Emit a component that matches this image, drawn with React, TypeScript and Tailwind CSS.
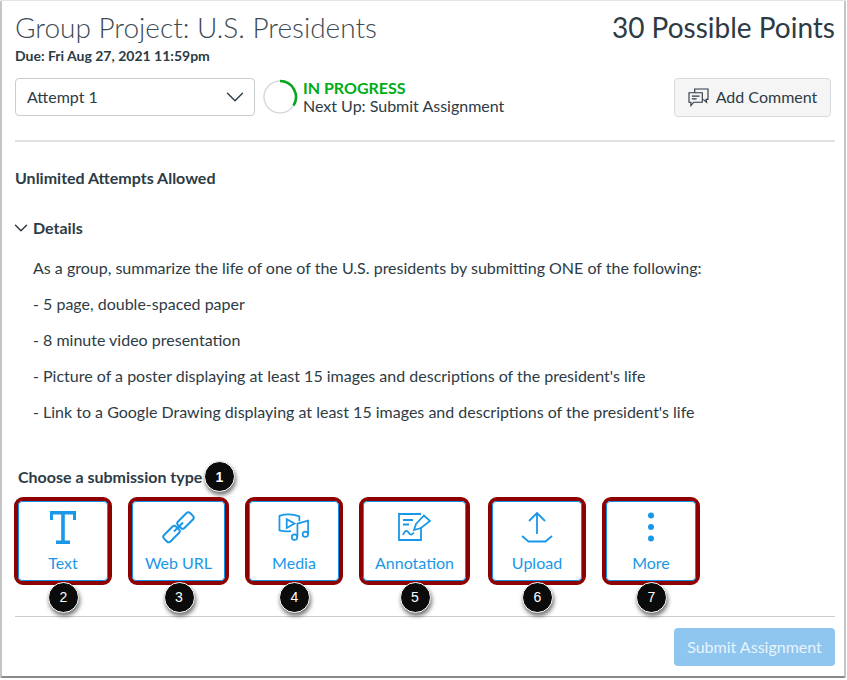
import type { ReactNode } from "react";
import { ChevronDown } from "lucide-react";

function Badge({ n, className }: { n: number; className: string }) {
  return (
    <span
      className={`absolute flex h-[31px] w-[31px] items-center justify-center rounded-full border border-white bg-[#0b0b0b] font-['Liberation_Sans',sans-serif] text-[14px] text-white shadow-[1px_3px_4px_rgba(0,0,0,0.55)] ${className}`}
    >
      {n}
    </span>
  );
}

function TypeButton({ label, n, width, mr, children }: { label: string; n: number; width: string; mr: string; children: ReactNode }) {
  return (
    <div className={`relative h-[88px] shrink-0 rounded-[9px] border-[4px] border-[#8f0000] ${width} ${mr}`}>
      <div className="flex h-full flex-col items-center rounded-[4px] border border-[#0f8fe6] bg-white text-[#1a97e8]">
        <div className="flex h-[51px] items-center justify-center pb-[1px]">{children}</div>
        <span className="text-[16px] leading-[20px]">{label}</span>
      </div>
      <Badge n={n} className="bottom-[-32px] left-1/2 -ml-[15px]" />
    </div>
  );
}

const LINES = [
  "As a group, summarize the life of one of the U.S. presidents by submitting ONE of the following:",
  "- 5 page, double-spaced paper",
  "- 8 minute video presentation",
  "- Picture of a poster displaying at least 15 images and descriptions of the president's life",
  "- Link to a Google Drawing displaying at least 15 images and descriptions of the president's life",
];

export default function App() {
  return (
    <div className="h-[680px] w-[847px] overflow-hidden bg-white font-['Lato','Noto_Sans',sans-serif] text-[#2d3b45]">
      <div className="h-[678px] w-[846px] rounded-[2px] border-x-2 border-t border-b-2 border-x-[#c4c4c4] border-t-[#e4e4e4] border-b-[#8a8a8a] pl-[13px] pr-[9px]">
        <div className="flex items-start justify-between pt-[8px]">
          <h1 className="text-[28px] font-light leading-[36px] text-[#3d4a54]">Group Project: U.S. Presidents</h1>
          <div className="text-[28px] leading-[36px]">30 Possible Points</div>
        </div>
        <div className="mt-[2px] text-[14px] font-bold leading-[18px]">Due: Fri Aug 27, 2021 11:59pm</div>

        <div className="mt-[12px] flex h-[40px] items-center pr-[4px]">
          <div className="flex h-[38px] w-[240px] items-center justify-between rounded-[4px] border border-[#c7cdd1] pl-[11px] pr-[4px] text-[16px]">
            Attempt 1
            <ChevronDown size={30} strokeWidth={1.1} />
          </div>
          <svg viewBox="0 0 36 36" className="ml-[7px] h-[36px] w-[36px]">
            <circle cx="18" cy="18" r="16" fill="none" stroke="#d5dadd" strokeWidth="1.5" />
            <path d="M18 2a16 16 0 0 1 13.500 24.500" fill="none" stroke="#03a61c" strokeWidth="2.600" />
          </svg>
          <div className="ml-[5px] text-[16px] leading-[18px]">
            <div className="font-bold text-[#00ac18]">IN PROGRESS</div>
            <div>Next Up: Submit Assignment</div>
          </div>
          <button className="ml-auto flex h-[39px] w-[157px] items-center justify-center gap-[7px] rounded-[4px] border border-[#d7dadc] bg-[#f5f5f5] text-[16px]">
            <svg viewBox="0 0 22 20" className="h-[19px] w-[21px]" fill="none" stroke="#2d3b45" strokeWidth="1.2">
              <path d="M7 5V1h14v11h-2l.5 3-3.500-3" />
              <path d="M1 5h14v10H6l-3 3.500V15H1z" />
              <path d="M4 8.500h8M4 11.500h5" />
            </svg>
            Add Comment
          </button>
        </div>

        <div className="mt-[23px] border-t-2 border-[#dfe3e5]" />
        <div className="mt-[26px] text-[16px] font-bold leading-[20px]">Unlimited Attempts Allowed</div>
        <div className="mt-[30px] flex items-center gap-[1.5px] text-[16px] font-bold leading-[20px]">
          <ChevronDown size={22} strokeWidth={1.6} className="-my-[2px] -ml-[5.5px]" />
          Details
        </div>
        <div className="mt-[18px] flex flex-col gap-[12px] pl-[18px] text-[16px] leading-[24px]">
          {LINES.map((line) => (
            <p key={line}>{line}</p>
          ))}
        </div>

        <div className="relative mt-[43px] pl-[3px] text-[16px] font-bold leading-[20px]">
          Choose a submission type
          <Badge n={1} className="left-[189px] top-[-6px]" />
        </div>
        <div className="-ml-px mt-[10px] flex">
          <TypeButton label="Text" n={2} width="w-[98px]" mr="mr-[16px]">
            <svg viewBox="0 0 26 33" className="h-[33px] w-[26px]" fill="#1a97e8">
              <path d="M0 0h26v9h-3V3.500H14.800V29.500H20V33H6v-3.500h5.200V3.500H3V9H0z" />
            </svg>
          </TypeButton>
          <TypeButton label="Web URL" n={3} width="w-[101px]" mr="mr-[16px]">
            <svg viewBox="0 0 33 33" className="h-[33px] w-[33px]" fill="none" stroke="#1a97e8" strokeWidth="2">
              <rect x="15" y="5" width="17" height="9" rx="2.500" transform="rotate(-45 23.500 9.500)" />
              <rect x="1" y="18.500" width="17" height="9" rx="2.500" transform="rotate(-45 9.500 23)" />
              <path d="M12 20.500l9-9" />
            </svg>
          </TypeButton>
          <TypeButton label="Media" n={4} width="w-[98px]" mr="mr-[16px]">
            <svg viewBox="0 0 34 28" className="h-[28px] w-[33px]" fill="none" stroke="#1a97e8" strokeWidth="1.800">
              <path d="M22 8V3C15 .5 8 .5 1.500 2.500v15c4 1 8 1.200 12 .8" />
              <path d="M9 6v9l8-4.500z" />
              <path d="M20 9.500V24M20 10.500l11-3V21" />
              <circle cx="17" cy="24.500" r="2.800" />
              <circle cx="28.200" cy="21.500" r="2.800" />
            </svg>
          </TypeButton>
          <TypeButton label="Annotation" n={5} width="w-[111px]" mr="mr-[18px]">
            <svg viewBox="0 0 33 28" className="h-[28px] w-[33px]" fill="none" stroke="#1a97e8" strokeWidth="1.800">
              <path d="M23 1H1v26h22V14" />
              <path d="M5 7h10M5 11.500h6" />
              <path d="M5 22c2-5 4-5 5.500-2.500s3 3 5.500 0" />
              <path d="M16 17l2-6 8-8.500L32 8l-9 7z" />
            </svg>
          </TypeButton>
          <TypeButton label="Upload" n={6} width="w-[98px]" mr="mr-[16px]">
            <svg viewBox="0 0 32 31" className="h-[31px] w-[32px]" fill="none" stroke="#1a97e8" strokeWidth="1.800">
              <path d="M16 22V1.500M8 9l8-8 8 8" />
              <path d="M1 24l6.500 5.500h17L31 24" />
            </svg>
          </TypeButton>
          <TypeButton label="More" n={7} width="w-[98px]" mr="">
            <svg viewBox="0 0 8 30" className="h-[30px] w-[8px]" fill="#1a97e8">
              <circle cx="4" cy="3.500" r="3" />
              <circle cx="4" cy="15" r="3" />
              <circle cx="4" cy="26.500" r="3" />
            </svg>
          </TypeButton>
        </div>

        <div className="mt-[31px] border-t border-[#c7cdd1]" />
        <div className="mt-[11px] flex justify-end">
          <button className="h-[38px] w-[161px] rounded-[4px] bg-[#8fc6ef] text-[16px] text-[#e8f3fb]">Submit Assignment</button>
        </div>
      </div>
    </div>
  );
}
